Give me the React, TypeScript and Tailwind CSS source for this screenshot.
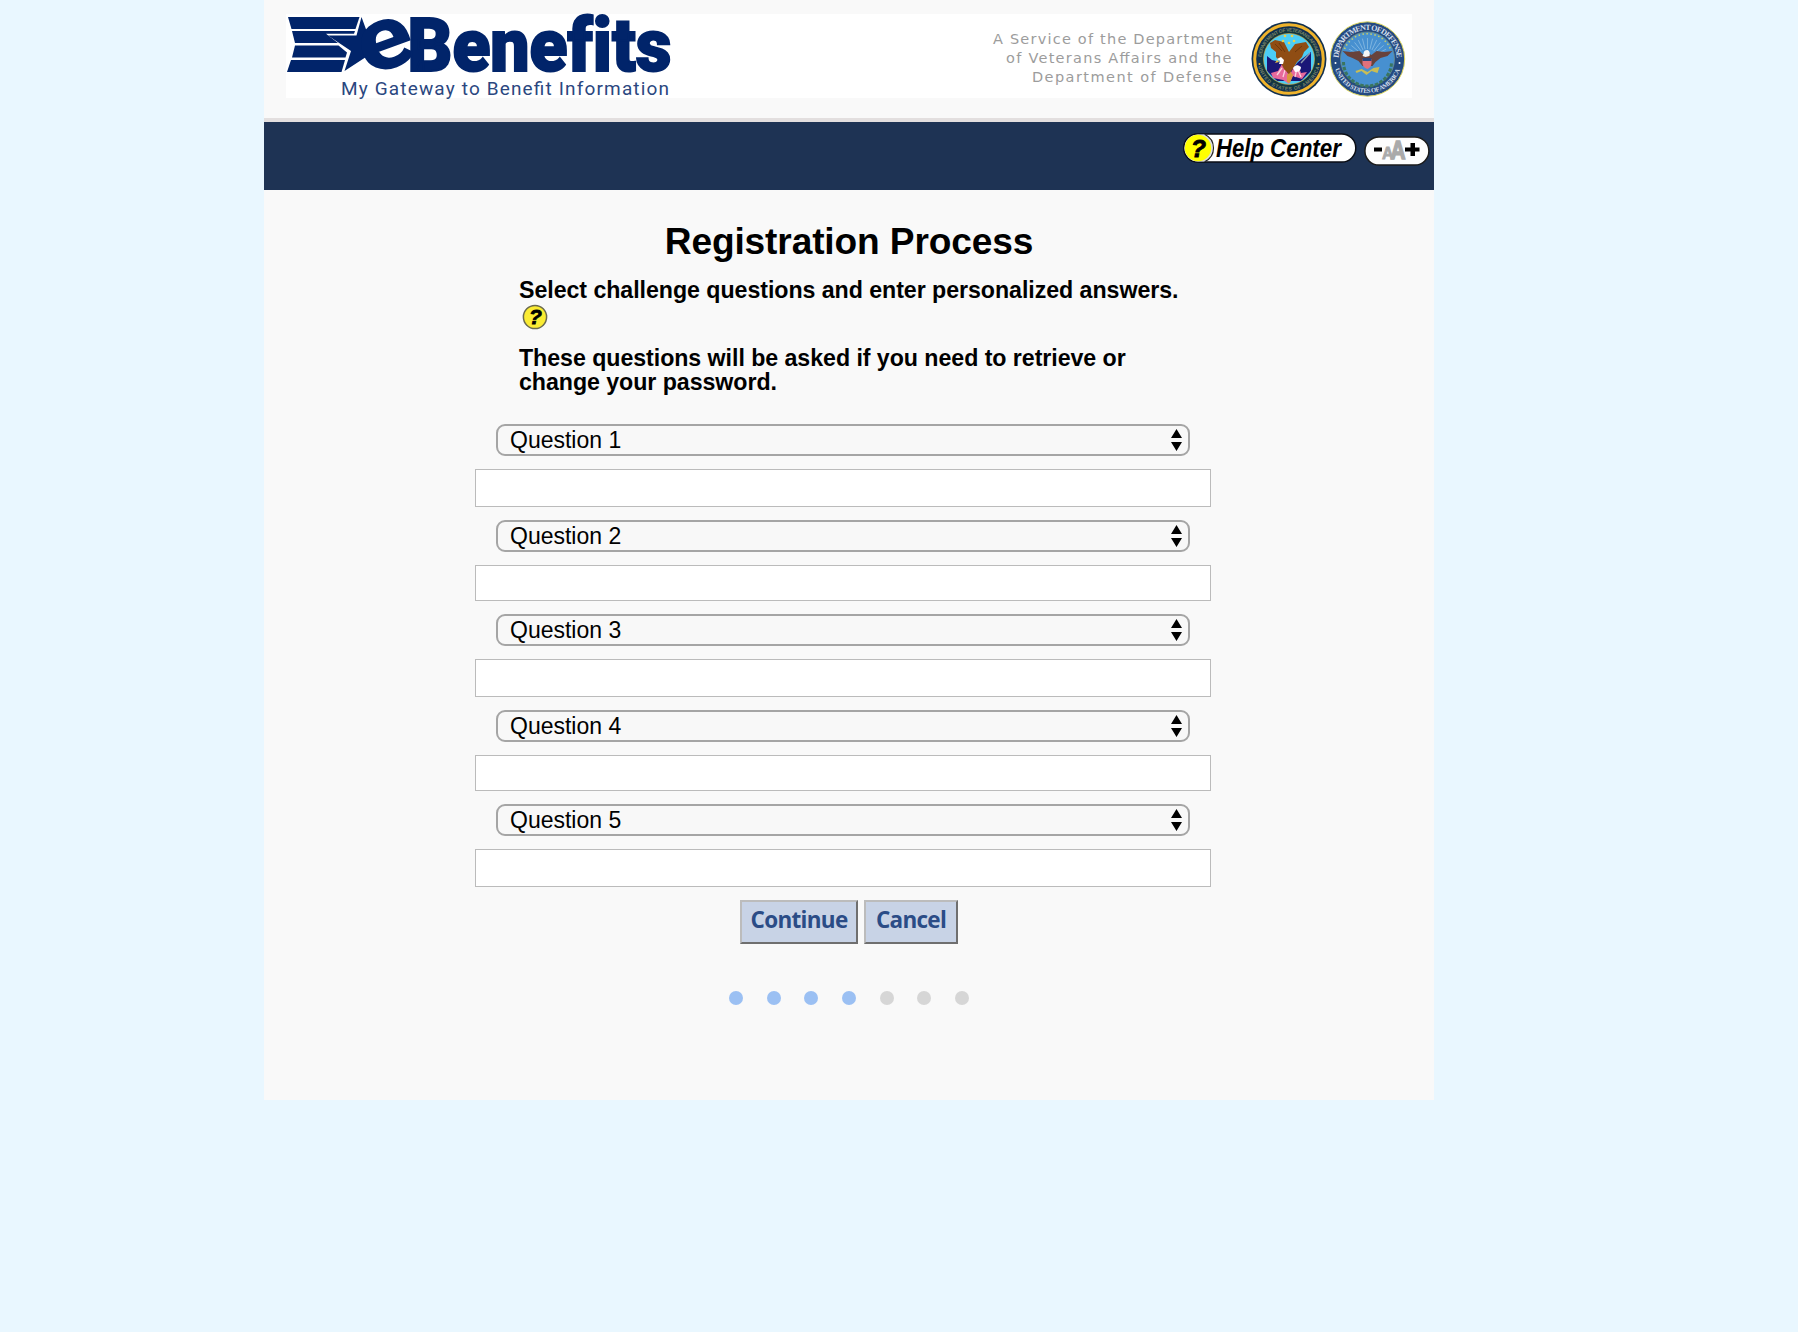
import React from "react";

const NAVY = "#01246a";

function Logo() {
  return (
    <svg
      className="overflow-visible"
      width="400"
      height="84"
      viewBox="286 14 400 84"
      role="img"
      aria-label="eBenefits"
    >
      <g fill={NAVY}>
        <path d="M288 17H359.500L355.500 29H291.500Z" />
        <path d="M292 31H355L354 33.700H326L338 43H295Z" />
        <path d="M295 45.500H338.500L347 52.500L345.500 57.500H292Z" />
        <path d="M291 60H345L341.500 72H287Z" />
        <path d="M361.500 17L367 32L372 44L366 57L344.500 71L351 51L328 35.500H356.500Z" />
      </g>
      <text
        transform="translate(385.500 44.500) rotate(-20)"
        y="24.300"
        textAnchor="middle"
        fontFamily="Roboto"
        fontWeight="800"
        fontSize="91"
        fill={NAVY}
        textLength="55"
        lengthAdjust="spacingAndGlyphs"
      >
        e
      </text>
      <text
        x="407.500"
        y="71"
        fontFamily="Roboto"
        fontWeight="900"
        fontSize="74.500"
        fill={NAVY}
        stroke={NAVY}
        strokeWidth="2"
        textLength="264"
        lengthAdjust="spacingAndGlyphs"
        style={{ fontVariantLigatures: "none" }}
      >
        Benefits
      </text>
      <text x="341" y="94.500" fontFamily="Roboto" fontSize="19" fill="#2b477f" textLength="328">
        My Gateway to Benefit Information
      </text>
    </svg>
  );
}

function ServiceText() {
  return (
    <svg
      width="245"
      height="84"
      viewBox="990 14 245 84"
      fontFamily="DejaVu Sans"
      fontSize="14.500"
      fill="#9c9c9c"
    >
      <text x="993" y="44" textLength="239">A Service of the Department</text>
      <text x="1006" y="63" textLength="225.500">of Veterans Affairs and the</text>
      <text x="1032" y="81.500" textLength="199.500">Department of Defense</text>
    </svg>
  );
}

function VeteransSeal() {
  return (
    <svg width="76" height="76" viewBox="-38 -38 76 76">
      <defs>
        <path id="va-top" d="M-27.500 0A27.500 27.500 0 0 1 27.500 0" />
        <path id="va-bottom" d="M-31.500 0A31.500 31.500 0 0 0 31.500 0" />
        <clipPath id="va-clip">
          <circle r="25" />
        </clipPath>
      </defs>
      <circle r="37.500" fill="#12304f" />
      <circle r="34.300" fill="none" stroke="#efb32c" strokeWidth="3" />
      <circle r="29.500" fill="#12363f" />
      <circle r="25.500" fill="#4ccdf5" stroke="#e0b23c" strokeWidth="0.600" />
      <g clipPath="url(#va-clip)">
        <path d="M-22 -3L-17 1L-9 3L0 14L9 3L22 -7V12L12 22L-12 22L-22 12Z" fill="#1b1777" />
        <path d="M-16 19L-18 14L-11 12L-7 5L-3 10L0 17L5 8L9 6L12 14L18 13L13 20L4 17L0 25L-6 21Z" fill="#e86a9c" />
        <path d="M-12 16L-7 9M-6 18L-4 11M6 18L8 9M12 18L9 11" stroke="#f9d3df" strokeWidth="1.300" />
        <path d="M-2 16L1 12L4 16L1 24L-2 23Z" fill="#d99a3c" />
      </g>
      <path
        d="M-19 -16L-14 -19L-5 -17L0 -7L6 -15L17 -17L20 -12L15 -7L13 -2L8 3L5 8L0 15L-5 10L-8 4L-13 -2L-13 -7L-18 -11Z"
        fill="#8f4d14"
      />
      <path d="M-14 -15L-7 -8M-10 -16L-4 -7M13 -13L6 -7" stroke="#6f390c" strokeWidth="1" />
      <path d="M-12 0L-8 -2L-5 1L-6 5L-10 5L-9 2Z" fill="#ffffff" />
      <path d="M-12 1L-14 4L-10 3Z" fill="#eec23d" />
      <path d="M4 9Q7 4 12 8Q12 13 6 13Z" fill="#ffffff" />
      <path d="M12 4L21 -6" stroke="#8e99ac" strokeWidth="1.400" />
      <g fill="#e9d34b">
        <circle cx="-4" cy="-23" r="1.300" />
        <circle cx="3" cy="-23" r="1.300" />
        <circle cx="-6" cy="-18" r="1.300" />
        <circle cx="5" cy="-18" r="1.300" />
        <circle cx="0" cy="-16" r="1.300" />
      </g>
      <g fontFamily="Liberation Sans" fontSize="5" fontWeight="700" fill="#778267">
        <text>
          <textPath href="#va-top" startOffset="2" textLength="82">DEPARTMENT OF VETERANS AFFAIRS</textPath>
        </text>
        <text>
          <textPath href="#va-bottom" startOffset="7" textLength="84">UNITED STATES OF AMERICA</textPath>
        </text>
      </g>
      <circle cx="-29.500" cy="5" r="1" fill="#efb32c" />
      <circle cx="29.500" cy="5" r="1" fill="#efb32c" />
    </svg>
  );
}

function DefenseSeal() {
  const rays = [-62, -50, -38, -26, -14, 0, 14, 26, 38, 50, 62];
  return (
    <svg width="77" height="76" viewBox="-38.500 -38 77 76">
      <defs>
        <path id="dod-top" d="M-29 0A29 29 0 0 1 29 0" />
        <path id="dod-bottom" d="M-34 0A34 34 0 0 0 34 0" />
      </defs>
      <circle r="37.200" fill="#244a80" stroke="#dfd75f" strokeWidth="1" />
      <circle r="27" fill="#4790d0" stroke="#6f8f86" strokeWidth="0.800" />
      <g stroke="#80b5df" strokeWidth="0.900">
        {rays.map((a) => (
          <path key={a} d="M0 -10V-21" transform={"rotate(" + a + ")"} />
        ))}
      </g>
      <path d="M-23 -10A25 25 0 0 1 23 -10" fill="none" stroke="#c9cf66" strokeWidth="1.500" strokeDasharray="1.500 2.500" />
      <path d="M-24 3A24 24 0 0 0 24 3" fill="none" stroke="#3a7560" strokeWidth="3" strokeDasharray="3.500 1.500" />
      <path
        d="M-25 -8L-17 -7L-8 -8L-4 -4L0 -6L4 -4L9 -8L17 -7L25 -8L20 -3L13 -1L8 3L5 7L-5 7L-9 2L-15 -1L-20 -3Z"
        fill="#68423b"
      />
      <path d="M-4 -5Q-4 -9 0 -9Q3 -8 2 -3L-2 -2L-5 -3Z" fill="#f4f6f7" />
      <path d="M-5 0H4V5Q3 9 0 10Q-4 9 -5 5Z" fill="#e0717c" />
      <path d="M-5 -1H4V2H-5Z" fill="#28477e" />
      <path d="M-12 12L-6 10L0 13L6 9L12 8L10 14L4 12L-1 16L-6 12L-11 14Z" fill="#c9bd55" />
      <g fontFamily="Liberation Serif" fontSize="8" fontWeight="700" fill="#d4dfec">
        <text>
          <textPath href="#dod-top" startOffset="1" textLength="89">DEPARTMENT OF DEFENSE</textPath>
        </text>
        <text fontSize="6.500">
          <textPath href="#dod-bottom" startOffset="10" textLength="86">UNITED STATES OF AMERICA</textPath>
        </text>
      </g>
      <circle cx="-32" cy="4" r="1" fill="#ffffff" />
      <circle cx="32" cy="4" r="1" fill="#ffffff" />
    </svg>
  );
}

function HelpCenter() {
  return (
    <svg width="174" height="30" viewBox="0 0 174 30" role="img" aria-label="Help Center">
      <rect x="0.800" y="0.900" width="172" height="28.200" rx="14.100" fill="#ffffff" stroke="#0a0d14" strokeWidth="1.500" />
      <path d="M21 1.500A15 15 0 0 1 21 28.500H15A13.500 13.500 0 0 1 15 1.500Z" fill="#dcdcdc" />
      <circle cx="15" cy="15" r="13.200" fill="#ffff00" />
      <path d="M22 1.500A15 15 0 0 1 22 28.500" fill="none" stroke="#222222" strokeWidth="1.200" />
      <text
        x="8"
        y="23.500"
        fontFamily="Liberation Sans"
        fontSize="24.500"
        fontWeight="700"
        fontStyle="italic"
        fill="#000"
        stroke="#000"
        strokeWidth="0.900"
      >
        ?
      </text>
      <g fontFamily="Liberation Sans" fontSize="25.500" fontStyle="italic" fontWeight="700" fill="#000">
        <text x="33" y="23.600" textLength="48" lengthAdjust="spacingAndGlyphs">
          Help
        </text>
        <text x="87" y="23.600" textLength="71" lengthAdjust="spacingAndGlyphs">
          Center
        </text>
      </g>
    </svg>
  );
}

function TextSize() {
  return (
    <svg width="66" height="30" viewBox="0 0 66 30" role="img" aria-label="Text size">
      <rect x="0.900" y="0.900" width="64" height="28.200" rx="14.100" fill="#fdfdfd" stroke="#1b1b1b" strokeWidth="1.500" />
      <path d="M10 11.500H18V15.500H10Z" fill="#000" />
      <text x="18" y="22.500" fontFamily="Liberation Sans" fontSize="16" fontWeight="700" fill="#aaa" stroke="#aaa" strokeWidth="0.800">A</text>
      <text
        x="26.500"
        y="22.500"
        fontFamily="Liberation Sans"
        fontSize="25.500"
        fontWeight="700"
        fill="#aaa"
        stroke="#aaa"
        strokeWidth="1.500"
        textLength="15"
        lengthAdjust="spacingAndGlyphs"
      >
        A
      </text>
      <path d="M46.500 7H51V11.500H55.500V15.500H51V20H46.500V15.500H41V11.500H46.500Z" fill="#000" />
    </svg>
  );
}

function HelpBadge() {
  return (
    <svg width="26" height="26" viewBox="-13 -13 26 26" role="img" aria-label="Help">
      <circle r="11.600" fill="#fbec33" stroke="#6b6a4e" strokeWidth="1.500" />
      <text
        x="-6"
        y="7.300"
        fontFamily="Liberation Sans"
        fontSize="21"
        fontWeight="700"
        fontStyle="italic"
        fill="#000"
        stroke="#000"
        strokeWidth="0.800"
      >
        ?
      </text>
    </svg>
  );
}

function Question({ n, tall }: { n: number; tall: boolean }) {
  return (
    <div className="flex flex-col">
      <div className="relative ml-[21px] h-8 w-[694px]">
        <select
          className="block h-8 w-full appearance-none rounded-[9px] border-2 border-[#a5a5a5] bg-[#f8f8f8] pl-3 text-[23px] leading-7 text-black"
          defaultValue={n}
        >
          <option value={n}>Question {n}</option>
        </select>
        <svg className="pointer-events-none absolute top-[5px] right-2" width="11" height="22" viewBox="0 0 11 22">
          <path d="M5.500 0L11 9H0Z M0 13H11L5.500 22Z" fill="#000" />
        </svg>
      </div>
      <input
        type="text"
        aria-label={"Answer " + n}
        className={
          tall
            ? "mt-[13px] h-[38px] w-full border border-[#bbbbbb] bg-white px-2"
            : "mt-[13px] h-9 w-full border border-[#bbbbbb] bg-white px-2"
        }
      />
    </div>
  );
}

const BUTTON =
  "h-11 border-2 border-t-[#bcbcbc] border-l-[#bcbcbc] border-r-[#6f6f6f] border-b-[#6f6f6f] bg-[#c8d3e6] pb-1 font-['Open_Sans',sans-serif] text-[22.500px] font-bold leading-[34px] tracking-[-0.700px] text-[#2b4c86]";

export default function App() {
  return (
    <div className="min-h-[1332px] bg-[#e9f7ff] pl-[264px] font-['Liberation_Sans',Arial,sans-serif] text-black">
      <div className="flex h-[1100px] w-[1170px] flex-col bg-[#f9f9f9]">
        <header className="h-[122px] border-b-4 border-[#e3dfdf] px-[22px] pt-[14px]">
          <div className="flex h-[84px] items-center bg-white">
            <Logo />
            <div className="ml-auto flex h-[84px] items-start">
              <ServiceText />
              <div className="mr-[6px] ml-[16px] flex gap-[2px] pt-[7px]">
                <VeteransSeal />
                <DefenseSeal />
              </div>
            </div>
          </div>
        </header>
        <nav className="flex h-[68px] shrink-0 items-start justify-end gap-[7px] bg-[#1e3354] pt-[11px] pr-1">
          <HelpCenter />
          <div className="pt-[3px]">
            <TextSize />
          </div>
        </nav>
        <main className="flex flex-col items-center">
          <h1 className="mt-[30px] h-[42px] text-[37.100px] leading-[42px] font-bold tracking-[-0.120px]">Registration Process</h1>
          <div className="mt-4 w-[660px] text-[23.200px] leading-6 font-bold tracking-[-0.050px]">
            <p className="whitespace-nowrap">Select challenge questions and enter personalized answers.</p>
            <div className="flex h-[30px] items-center pl-[3px]">
              <HelpBadge />
            </div>
            <p className="mt-[14px]">
              These questions will be asked if you need to retrieve or
              <br />
              change your password.
            </p>
          </div>
          <form className="mt-[30px] mr-3 flex w-[736px] flex-col gap-[13px]">
            {[1, 2, 3, 4, 5].map((n) => (
              <Question key={n} n={n} tall={n % 2 === 1} />
            ))}
          </form>
          <div className="mt-[13px] flex gap-[6px]">
            <button className={BUTTON + " w-[118px]"}>Continue</button>
            <button className={BUTTON + " w-[94px]"}>Cancel</button>
          </div>
          <div className="mt-[47px] flex gap-[23.700px]">
            {[0, 1, 2, 3, 4, 5, 6].map((i) => (
              <span key={i} className={i < 4 ? "size-[14px] rounded-full bg-[#9bc0f3]" : "size-[14px] rounded-full bg-[#d6d6d6]"} />
            ))}
          </div>
        </main>
      </div>
    </div>
  );
}
